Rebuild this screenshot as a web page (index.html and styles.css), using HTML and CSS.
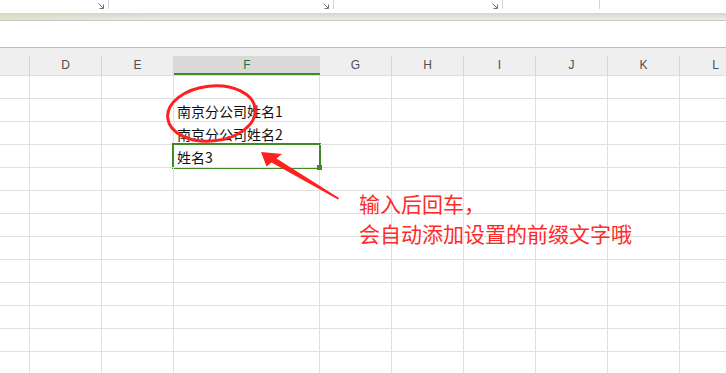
FILE: index.html
```html
<!DOCTYPE html>
<html lang="zh-CN">
<head>
<meta charset="utf-8">
<title>Sheet</title>
<link rel="stylesheet" href="styles.css">
</head>
<body>
<div class="sheet">
  <div class="ribbon">
    <div class="seg s1"><svg class="launcher" viewBox="0 0 6 6" width="6" height="6"><path d="M0.5 0.5 L5 5 M5.5 1.5 V5.5 H1.5" /></svg></div>
    <div class="seg s2"><svg class="launcher" viewBox="0 0 6 6" width="6" height="6"><path d="M0.5 0.5 L5 5 M5.5 1.5 V5.5 H1.5" /></svg></div>
    <div class="seg s3"><svg class="launcher" viewBox="0 0 6 6" width="6" height="6"><path d="M0.5 0.5 L5 5 M5.5 1.5 V5.5 H1.5" /></svg></div>
    <div class="seg s4"></div>
  </div>
  <div class="band"></div>
  <div class="formula"></div>
  <div class="colhead">
    <div class="hc"></div>
    <div class="hc">D</div>
    <div class="hc">E</div>
    <div class="hc active">F</div>
    <div class="hc">G</div>
    <div class="hc">H</div>
    <div class="hc">I</div>
    <div class="hc">J</div>
    <div class="hc">K</div>
    <div class="hc">L</div>
  </div>
  <div class="grid">
    <div class="cell"></div><div class="cell"></div><div class="cell"></div><div class="cell"></div><div class="cell"></div><div class="cell"></div><div class="cell"></div><div class="cell"></div><div class="cell"></div><div class="cell"></div>
    <div class="cell"></div><div class="cell"></div><div class="cell"></div><div class="cell">南京分公司姓名1</div><div class="cell"></div><div class="cell"></div><div class="cell"></div><div class="cell"></div><div class="cell"></div><div class="cell"></div>
    <div class="cell"></div><div class="cell"></div><div class="cell"></div><div class="cell">南京分公司姓名2</div><div class="cell"></div><div class="cell"></div><div class="cell"></div><div class="cell"></div><div class="cell"></div><div class="cell"></div>
    <div class="cell"></div><div class="cell"></div><div class="cell"></div><div class="cell selected">姓名3<span class="handle"></span></div><div class="cell"></div><div class="cell"></div><div class="cell"></div><div class="cell"></div><div class="cell"></div><div class="cell"></div>
    <div class="cell"></div><div class="cell"></div><div class="cell"></div><div class="cell"></div><div class="cell"></div><div class="cell"></div><div class="cell"></div><div class="cell"></div><div class="cell"></div><div class="cell"></div>
    <div class="cell"></div><div class="cell"></div><div class="cell"></div><div class="cell"></div><div class="cell"></div><div class="cell"></div><div class="cell"></div><div class="cell"></div><div class="cell"></div><div class="cell"></div>
    <div class="cell"></div><div class="cell"></div><div class="cell"></div><div class="cell"></div><div class="cell"></div><div class="cell"></div><div class="cell"></div><div class="cell"></div><div class="cell"></div><div class="cell"></div>
    <div class="cell"></div><div class="cell"></div><div class="cell"></div><div class="cell"></div><div class="cell"></div><div class="cell"></div><div class="cell"></div><div class="cell"></div><div class="cell"></div><div class="cell"></div>
    <div class="cell"></div><div class="cell"></div><div class="cell"></div><div class="cell"></div><div class="cell"></div><div class="cell"></div><div class="cell"></div><div class="cell"></div><div class="cell"></div><div class="cell"></div>
    <div class="cell"></div><div class="cell"></div><div class="cell"></div><div class="cell"></div><div class="cell"></div><div class="cell"></div><div class="cell"></div><div class="cell"></div><div class="cell"></div><div class="cell"></div>
    <div class="cell"></div><div class="cell"></div><div class="cell"></div><div class="cell"></div><div class="cell"></div><div class="cell"></div><div class="cell"></div><div class="cell"></div><div class="cell"></div><div class="cell"></div>
    <div class="cell"></div><div class="cell"></div><div class="cell"></div><div class="cell"></div><div class="cell"></div><div class="cell"></div><div class="cell"></div><div class="cell"></div><div class="cell"></div><div class="cell"></div>
    <div class="cell"></div><div class="cell"></div><div class="cell"></div><div class="cell"></div><div class="cell"></div><div class="cell"></div><div class="cell"></div><div class="cell"></div><div class="cell"></div><div class="cell"></div>
    <div class="cell"></div><div class="cell"></div><div class="cell"></div><div class="cell"></div><div class="cell"></div><div class="cell"></div><div class="cell"></div><div class="cell"></div><div class="cell"></div><div class="cell"></div>
  </div>
  <svg class="marks" width="726" height="373" viewBox="0 0 726 373">
    <ellipse cx="211.5" cy="113.5" rx="44" ry="27.5" transform="rotate(-6 211.5 113.5)" class="ring"/>
    <polygon class="arrow" points="261,152 282,154 276.5,158.5 339,198 338,199.5 271.5,162.5 266.5,166.5"/>
  </svg>
  <div class="note">输入后回车，<br>会自动添加设置的前缀文字哦</div>
</div>
</body>
</html>
```

FILE: styles.css
```css
html, body {
  margin: 0;
  padding: 0;
  background: #ffffff;
}
body {
  width: 726px;
  height: 373px;
  overflow: hidden;
}
.sheet {
  position: relative;
  width: 726px;
  height: 373px;
  overflow: hidden;
  font-family: "Noto Sans CJK SC", "Noto Sans", sans-serif;
}
.ribbon {
  display: flex;
  height: 13px;
  background: #ffffff;
}
.seg {
  height: 9px;
  border-right: 1px solid #d2d2d2;
  display: flex;
  justify-content: flex-end;
  align-items: flex-end;
  padding-right: 4px;
  box-sizing: border-box;
}
.s1 { width: 109px; }
.s2 { width: 225px; }
.s3 { width: 169px; }
.s4 { width: 97px; }
.launcher {
  display: block;
  margin-bottom: 0;
}
.launcher path {
  fill: none;
  stroke: #707070;
  stroke-width: 1;
}
.band {
  height: 7px;
  border-bottom: 1px solid #cbc9c3;
  background:
    linear-gradient(to right, rgba(205, 222, 185, 0.55), rgba(205, 222, 185, 0) 170px),
    linear-gradient(#d6d4cd, #e6e4df 60%, #eeede9);
}
.formula {
  height: 26px;
  background: #ffffff;
  border-bottom: 1px solid #bdbdbd;
}
.colhead {
  display: grid;
  grid-template-columns: 30px 72px 72px 146px 72px 72px 72px 72px 72px 72px;
  height: 27px;
  background: #efefef;
  align-items: end;
}
.hc {
  height: 19px;
  border-right: 1px solid #d6d6d6;
  box-sizing: border-box;
  text-align: center;
  font-family: "Liberation Sans", "DejaVu Sans", sans-serif;
  font-size: 12px;
  line-height: 19px;
  color: #4f4f4f;
}
.hc.active {
  height: 19px;
  background: #d9d9d9;
  border-right: none;
  border-bottom: 2px solid #3c8c22;
  line-height: 18px;
  color: #217346;
}
.grid {
  display: grid;
  grid-template-columns: 30px 72px 72px 146px 72px 72px 72px 72px 72px 72px;
  grid-auto-rows: 23px;
}
.cell {
  position: relative;
  box-sizing: border-box;
  border-top: 1px solid #dfdfdf;
  border-right: 1px solid #dfdfdf;
  padding: 2px 0 0 3px;
  font-size: 14px;
  line-height: 20px;
  color: #111111;
  white-space: nowrap;
}
.cell.selected::after {
  content: "";
  position: absolute;
  inset: -2px;
  border: 2px solid #3f8b24;
}
.handle {
  position: absolute;
  right: -3px;
  bottom: -3px;
  width: 5px;
  height: 5px;
  background: #3f8b24;
  z-index: 2;
}
.marks {
  position: absolute;
  left: 0;
  top: 0;
  pointer-events: none;
}
.ring {
  fill: none;
  stroke: #ff2020;
  stroke-width: 3;
}
.arrow {
  fill: #ff2020;
}
.note {
  position: absolute;
  left: 359px;
  top: 188px;
  font-size: 21px;
  line-height: 30px;
  color: #ff2a2a;
  white-space: nowrap;
}
```
